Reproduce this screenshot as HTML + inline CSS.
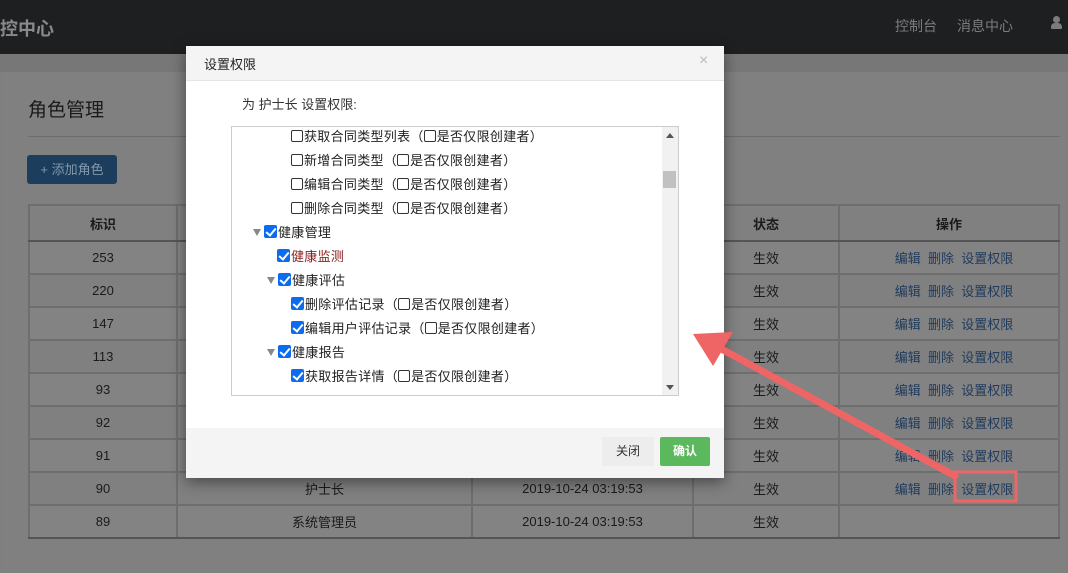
<!DOCTYPE html>
<html><head><meta charset="utf-8">
<style>
*{margin:0;padding:0;box-sizing:border-box}
body{width:1068px;height:573px;overflow:hidden;position:relative;background:#7f7f7f;font-family:"Liberation Sans","Noto Sans CJK SC",sans-serif;font-size:13px;color:#1a1a1a}
.a{position:absolute}
.nav{left:0;top:0;width:1068px;height:54px;background:#1d1f21}
.strip{left:0;top:54px;width:1068px;height:18px;background:#777}
.panel{left:2px;top:72px;width:1064px;height:501px;background:#808080}
table{position:absolute;left:28px;top:204px;border-collapse:collapse;width:1032px}
td,th{border:2px solid #6e6e6e;text-align:center;height:33px;font-size:13px;font-weight:normal;color:#1a1a1a}
th{height:36px;font-weight:bold;border-bottom:2px solid #555}
tr:last-child td{border-bottom:2px solid #555}
tr:nth-child(even) td{background:#838383}
.lk{color:#1f3a5c;padding-left:10px}
.modal{left:186px;top:46px;width:538px;height:432px;background:#fff;box-shadow:0 4px 14px rgba(0,0,0,.45)}
.mh{left:0;top:0;width:538px;height:35px;background:#f4f4f4;border-bottom:1px solid #e5e5e5}
.mf{left:0;top:382px;width:538px;height:50px;background:#f4f4f4}
.tree{left:45px;top:80px;width:448px;height:270px;border:1px solid #ccc;overflow:hidden}
.row{position:absolute;height:20px;line-height:20px;font-size:13px;color:#222;white-space:nowrap;letter-spacing:0.3px}
.cb{display:inline-block;width:12px;height:12px;border:1px solid #333;border-radius:2px;vertical-align:-1px;margin-right:1px;background:#fff}
.ck{display:inline-block;width:13px;height:13px;border-radius:2px;background:#0b6cf0;vertical-align:-1px;margin-right:1px;position:relative}
.ck:after{content:"";position:absolute;left:4px;top:1px;width:4px;height:8px;border:solid #fff;border-width:0 2px 2px 0;transform:rotate(40deg)}
.tri{display:inline-block;width:0;height:0;border-left:4px solid transparent;border-right:4px solid transparent;border-top:7px solid #888;margin-right:3px;vertical-align:1px}
</style></head><body>
<div class="a nav"></div>
<div class="a" style="left:0;top:15px;color:#8a8a8a;font-size:18px;font-weight:bold">控中心</div>
<div class="a" style="left:895px;top:16px;color:#7c7c7c;font-size:14px">控制台</div>
<div class="a" style="left:957px;top:16px;color:#7c7c7c;font-size:14px">消息中心</div>
<div class="a" style="left:1051px;top:16px;width:11px;height:14px">
 <div class="a" style="left:2px;top:0;width:7px;height:7px;border-radius:50%;background:#7c7c7c"></div>
 <div class="a" style="left:0;top:7px;width:11px;height:6px;border-radius:4px 4px 1px 1px;background:#7c7c7c"></div>
</div>
<div class="a strip"></div>
<div class="a panel"></div>
<div class="a" style="left:28px;top:95px;font-size:19px;color:#1a1a1a">角色管理</div>
<div class="a" style="left:28px;top:136px;width:1032px;height:1px;background:#6c6c6c"></div>
<div class="a" style="left:27px;top:155px;width:90px;height:29px;background:#1c3d5b;border-radius:3px;color:#8098ad;font-size:13px;line-height:29px;text-align:center">+ 添加角色</div>
<table>
<tr><th style="width:148px">标识</th><th style="width:295px"></th><th style="width:221px"></th><th style="width:146px">状态</th><th>操作</th></tr>
<tr><td>253</td><td></td><td></td><td>生效</td><td class="lk">编辑&nbsp; 删除&nbsp; 设置权限</td></tr>
<tr><td>220</td><td></td><td></td><td>生效</td><td class="lk">编辑&nbsp; 删除&nbsp; 设置权限</td></tr>
<tr><td>147</td><td></td><td></td><td>生效</td><td class="lk">编辑&nbsp; 删除&nbsp; 设置权限</td></tr>
<tr><td>113</td><td></td><td></td><td>生效</td><td class="lk">编辑&nbsp; 删除&nbsp; 设置权限</td></tr>
<tr><td>93</td><td></td><td></td><td>生效</td><td class="lk">编辑&nbsp; 删除&nbsp; 设置权限</td></tr>
<tr><td>92</td><td></td><td></td><td>生效</td><td class="lk">编辑&nbsp; 删除&nbsp; 设置权限</td></tr>
<tr><td>91</td><td></td><td></td><td>生效</td><td class="lk">编辑&nbsp; 删除&nbsp; 设置权限</td></tr>
<tr><td>90</td><td>护士长</td><td>2019-10-24 03:19:53</td><td>生效</td><td class="lk">编辑&nbsp; 删除&nbsp; 设置权限</td></tr>
<tr><td>89</td><td>系统管理员</td><td>2019-10-24 03:19:53</td><td>生效</td><td></td></tr>
</table>

<div class="a modal">
 <div class="a mh"></div>
 <div class="a" style="left:18px;top:8px;font-size:13px;color:#222">设置权限</div>
 <div class="a" style="left:513px;top:6px;font-size:16px;color:#bbb">×</div>
 <div class="a" style="left:56px;top:48px;font-size:13px;color:#333">为 护士长 设置权限:</div>
 <div class="a tree">
  <div class="row" style="left:59px;top:0px"><span class="cb"></span>获取合同类型列表（<span class="cb"></span>是否仅限创建者）</div>
  <div class="row" style="left:59px;top:24px"><span class="cb"></span>新增合同类型（<span class="cb"></span>是否仅限创建者）</div>
  <div class="row" style="left:59px;top:48px"><span class="cb"></span>编辑合同类型（<span class="cb"></span>是否仅限创建者）</div>
  <div class="row" style="left:59px;top:72px"><span class="cb"></span>删除合同类型（<span class="cb"></span>是否仅限创建者）</div>
  <div class="row" style="left:21px;top:96px"><span class="tri"></span><span class="ck"></span>健康管理</div>
  <div class="row" style="left:45px;top:120px"><span class="ck"></span><span style="color:#8a2020">健康监测</span></div>
  <div class="row" style="left:35px;top:144px"><span class="tri"></span><span class="ck"></span>健康评估</div>
  <div class="row" style="left:59px;top:168px"><span class="ck"></span>删除评估记录（<span class="cb"></span>是否仅限创建者）</div>
  <div class="row" style="left:59px;top:192px"><span class="ck"></span>编辑用户评估记录（<span class="cb"></span>是否仅限创建者）</div>
  <div class="row" style="left:35px;top:216px"><span class="tri"></span><span class="ck"></span>健康报告</div>
  <div class="row" style="left:59px;top:240px"><span class="ck"></span>获取报告详情（<span class="cb"></span>是否仅限创建者）</div>
  <div class="a" style="left:430px;top:0;width:16px;height:268px;background:#f1f1f1">
   <div class="a" style="left:4px;top:6px;border-left:4px solid transparent;border-right:4px solid transparent;border-bottom:5px solid #555"></div>
   <div class="a" style="left:1px;top:44px;width:13px;height:17px;background:#c1c1c1"></div>
   <div class="a" style="left:4px;top:258px;border-left:4px solid transparent;border-right:4px solid transparent;border-top:5px solid #555"></div>
  </div>
 </div>
 <div class="a mf"></div>
 <div class="a" style="left:416px;top:391px;width:52px;height:29px;background:#ededed;border-radius:2px;line-height:29px;text-align:center;font-size:12px;color:#333">关闭</div>
 <div class="a" style="left:474px;top:391px;width:50px;height:29px;background:#5cb85c;border-radius:2px;line-height:29px;text-align:center;font-size:12px;color:#fff;font-weight:bold">确认</div>
</div>

<svg class="a" style="left:0;top:0" width="1068" height="573">
 <g fill="none" stroke="#ef6565" stroke-width="7" stroke-linecap="round">
  <line x1="955" y1="476" x2="716" y2="346"/>
 </g>
 <polygon points="693,334 733,332 713,366" fill="#ef6565"/>
 <rect x="955" y="472" width="61" height="29" fill="none" stroke="#ef6565" stroke-width="3"/>
</svg>
</body></html>
